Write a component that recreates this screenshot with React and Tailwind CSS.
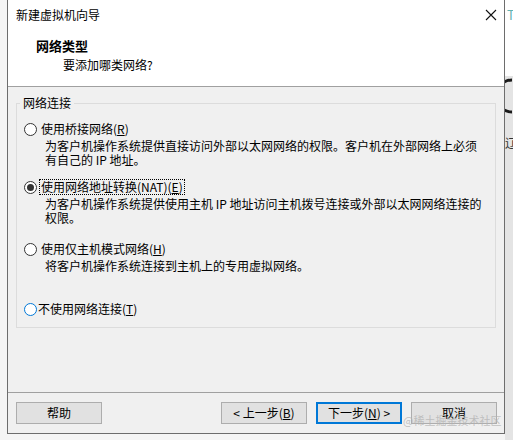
import React from 'react';

function Radio({ checked, hover }) {
  return (
    <span
      className={
        'flex w-[13px] h-[13px] shrink-0 items-center justify-center rounded-full border bg-white ' +
        (hover ? 'border-[#0078d7]' : 'border-[#333333]')
      }
    >
      {checked && <span className="w-[7px] h-[7px] rounded-full bg-[#333333]" />}
    </span>
  );
}

function Btn({ children, primary }) {
  return (
    <div
      className={
        'flex w-[86px] h-[22px] items-center justify-center bg-[#e1e1e1] text-[12px] leading-[14px] ' +
        (primary ? 'border-2 border-[#0078d7]' : 'border border-[#adadad]')
      }
    >
      {children}
    </div>
  );
}

export default function App() {
  return (
    <div className="relative flex w-[513px] h-[440px] overflow-hidden bg-[#f5f5f5] font-['Noto_Sans_CJK_SC',sans-serif] text-black">
      {/* desktop strip left */}
      <div className="w-[7px] shrink-0" />

      {/* wizard window */}
      <div className="flex w-[498px] h-[434px] shrink-0 flex-col border-x border-b border-[#6d6d6d] bg-[#f0f0f0]">
        {/* title bar */}
        <div className="flex h-[30px] items-center justify-between bg-white pl-[8px] pr-[7px]">
          <span className="text-[12px] leading-[16px]">新建虚拟机向导</span>
          <svg width="12" height="12" viewBox="0 0 12 12">
            <path d="M1 1 L11 11 M11 1 L1 11" stroke="#111" strokeWidth="1.1" fill="none" />
          </svg>
        </div>

        {/* header */}
        <div className="h-[57px] border-b border-[#a0a0a0] bg-white pl-[28px] pt-[8px]">
          <div className="text-[13px] leading-[16px] font-bold">网络类型</div>
          <div className="mt-[3px] ml-[27px] text-[12px] leading-[16px]">要添加哪类网络?</div>
        </div>

        {/* body */}
        <fieldset className="mx-[8px] mt-[9px] h-[232px] border border-[#dcdcdc] pl-[3px] text-[12px]">
          <legend className="px-[3px] leading-[14px]">网络连接</legend>

          <div className="mt-[11px] ml-[4px] flex h-[16px] items-center">
            <Radio />
            <span className="ml-[4px] leading-[16px]">
              使用桥接网络(<u>R</u>)
            </span>
          </div>
          <div className="mt-[2px] pl-[25px] leading-[14px] whitespace-nowrap">
            为客户机操作系统提供直接访问外部以太网网络的权限。客户机在外部网络上必须
            <br />
            有自己的 IP 地址。
          </div>

          <div className="mt-[12px] ml-[4px] flex h-[16px] items-center">
            <Radio checked />
            <span className="ml-[2px] border border-dotted border-black px-[1px] leading-[14px]">
              使用网络地址转换(NAT)(<u>E</u>)
            </span>
          </div>
          <div className="mt-[2px] pl-[25px] leading-[14px] whitespace-nowrap">
            为客户机操作系统提供使用主机 IP 地址访问主机拨号连接或外部以太网网络连接的
            <br />
            权限。
          </div>

          <div className="mt-[16px] ml-[4px] flex h-[16px] items-center">
            <Radio />
            <span className="ml-[4px] leading-[16px]">
              使用仅主机模式网络(<u>H</u>)
            </span>
          </div>
          <div className="mt-[2px] pl-[25px] leading-[14px] whitespace-nowrap">
            将客户机操作系统连接到主机上的专用虚拟网络。
          </div>

          <div className="mt-[28px] ml-[4px] flex h-[16px] items-center">
            <Radio hover />
            <span className="ml-[1px] leading-[16px]">
              不使用网络连接(<u>T</u>)
            </span>
          </div>
        </fieldset>

        {/* footer */}
        <div className="mt-auto flex h-[41px] items-start border-t border-[#a0a0a0] pl-[8px] pr-[7px] pt-[9px]">
          <Btn>帮助</Btn>
          <div className="flex-1" />
          <div className="flex gap-[9px]">
            <Btn>&lt; 上一步(<u>B</u>)</Btn>
            <Btn primary>
              下一步(<u>N</u>) &gt;
            </Btn>
            <Btn>取消</Btn>
          </div>
        </div>
      </div>

      {/* desktop strip right */}
      <div className="flex flex-1 flex-col">
        <div className="h-[76px] bg-white pt-[8px] pl-[2px] text-[13px] leading-[14px] text-[#5fb3b3]">T</div>
        <div className="flex-1 bg-[#e4e4e4] text-[12px] leading-[14px] text-[#333]">
          <svg width="8" height="40" viewBox="0 0 8 40" className="block">
            <path d="M7 4 A 16 16 0 0 0 7 36" stroke="#1a1a1a" strokeWidth="3" fill="none" />
          </svg>
          <div className="mt-[20px]">辽</div>
        </div>
      </div>

      {/* watermark overlay */}
      <div className="absolute left-[403px] top-[413px] text-[11px] leading-[14px] whitespace-nowrap text-[#b4b4b4]/80">
        @稀土掘金技术社区
      </div>
    </div>
  );
}
